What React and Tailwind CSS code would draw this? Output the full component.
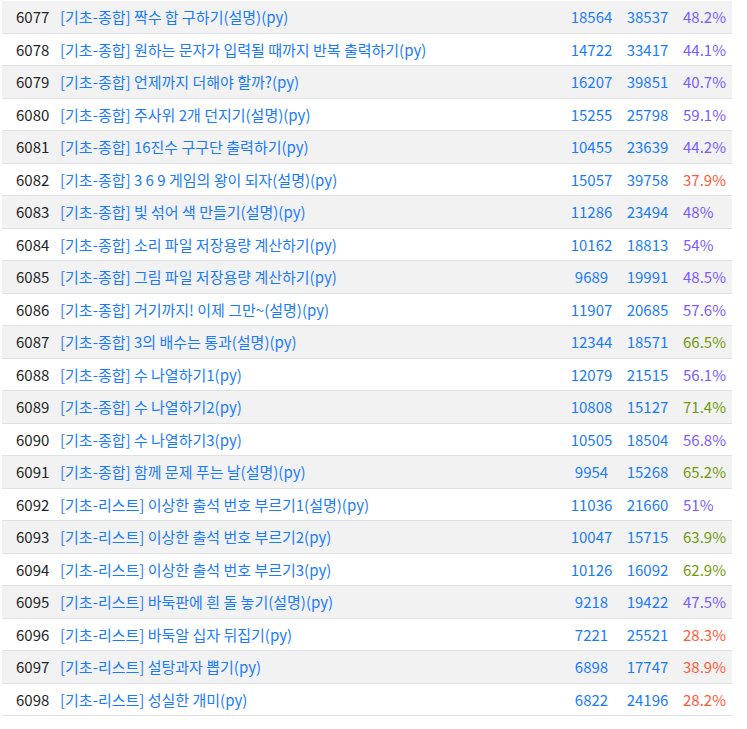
import React from "react";

const rows = [
  [6077, "[기초-종합] 짝수 합 구하기(설명)(py)", 18564, 38537, "48.2%"],
  [6078, "[기초-종합] 원하는 문자가 입력될 때까지 반복 출력하기(py)", 14722, 33417, "44.1%"],
  [6079, "[기초-종합] 언제까지 더해야 할까?(py)", 16207, 39851, "40.7%"],
  [6080, "[기초-종합] 주사위 2개 던지기(설명)(py)", 15255, 25798, "59.1%"],
  [6081, "[기초-종합] 16진수 구구단 출력하기(py)", 10455, 23639, "44.2%"],
  [6082, "[기초-종합] 3 6 9 게임의 왕이 되자(설명)(py)", 15057, 39758, "37.9%"],
  [6083, "[기초-종합] 빛 섞어 색 만들기(설명)(py)", 11286, 23494, "48%"],
  [6084, "[기초-종합] 소리 파일 저장용량 계산하기(py)", 10162, 18813, "54%"],
  [6085, "[기초-종합] 그림 파일 저장용량 계산하기(py)", 9689, 19991, "48.5%"],
  [6086, "[기초-종합] 거기까지! 이제 그만~(설명)(py)", 11907, 20685, "57.6%"],
  [6087, "[기초-종합] 3의 배수는 통과(설명)(py)", 12344, 18571, "66.5%"],
  [6088, "[기초-종합] 수 나열하기1(py)", 12079, 21515, "56.1%"],
  [6089, "[기초-종합] 수 나열하기2(py)", 10808, 15127, "71.4%"],
  [6090, "[기초-종합] 수 나열하기3(py)", 10505, 18504, "56.8%"],
  [6091, "[기초-종합] 함께 문제 푸는 날(설명)(py)", 9954, 15268, "65.2%"],
  [6092, "[기초-리스트] 이상한 출석 번호 부르기1(설명)(py)", 11036, 21660, "51%"],
  [6093, "[기초-리스트] 이상한 출석 번호 부르기2(py)", 10047, 15715, "63.9%"],
  [6094, "[기초-리스트] 이상한 출석 번호 부르기3(py)", 10126, 16092, "62.9%"],
  [6095, "[기초-리스트] 바둑판에 흰 돌 놓기(설명)(py)", 9218, 19422, "47.5%"],
  [6096, "[기초-리스트] 바둑알 십자 뒤집기(py)", 7221, 25521, "28.3%"],
  [6097, "[기초-리스트] 설탕과자 뽑기(py)", 6898, 17747, "38.9%"],
  [6098, "[기초-리스트] 성실한 개미(py)", 6822, 24196, "28.2%"],
];

function pctClass(p) {
  const v = parseFloat(p);
  if (v < 40) return "text-[#ff5a3a]";
  if (v >= 60) return "text-[#6f9a10]";
  return "text-[#7a5cff]";
}

export default function App() {
  return (
    <div
      className="w-[747px] h-[729px] bg-white pl-[2px] pt-[1px]"
      style={{ fontFamily: '"Noto Sans CJK KR", "Noto Sans", sans-serif' }}
    >
      <div className="w-[730px] flex flex-col">
        {rows.map((r, i) => (
          <div
            key={r[0]}
            className={
              "flex items-center h-[32.5px] border-b border-[#dee2e6] text-[15px] leading-[22px] pt-[1px] " +
              (i % 2 === 0 ? "bg-[#f2f2f2]" : "bg-white")
            }
          >
            <div className="w-[58px] pl-[14px] text-[#212529]">{r[0]}</div>
            <div className="w-[504px] text-[#1a7bff] whitespace-nowrap">{r[1]}</div>
            <div className="w-[55px] text-center text-[#1a7bff]">{r[2]}</div>
            <div className="w-[57px] text-center text-[#1a7bff]">{r[3]}</div>
            <div className={"flex-1 pl-[7px] " + pctClass(r[4])}>{r[4]}</div>
          </div>
        ))}
      </div>
    </div>
  );
}
